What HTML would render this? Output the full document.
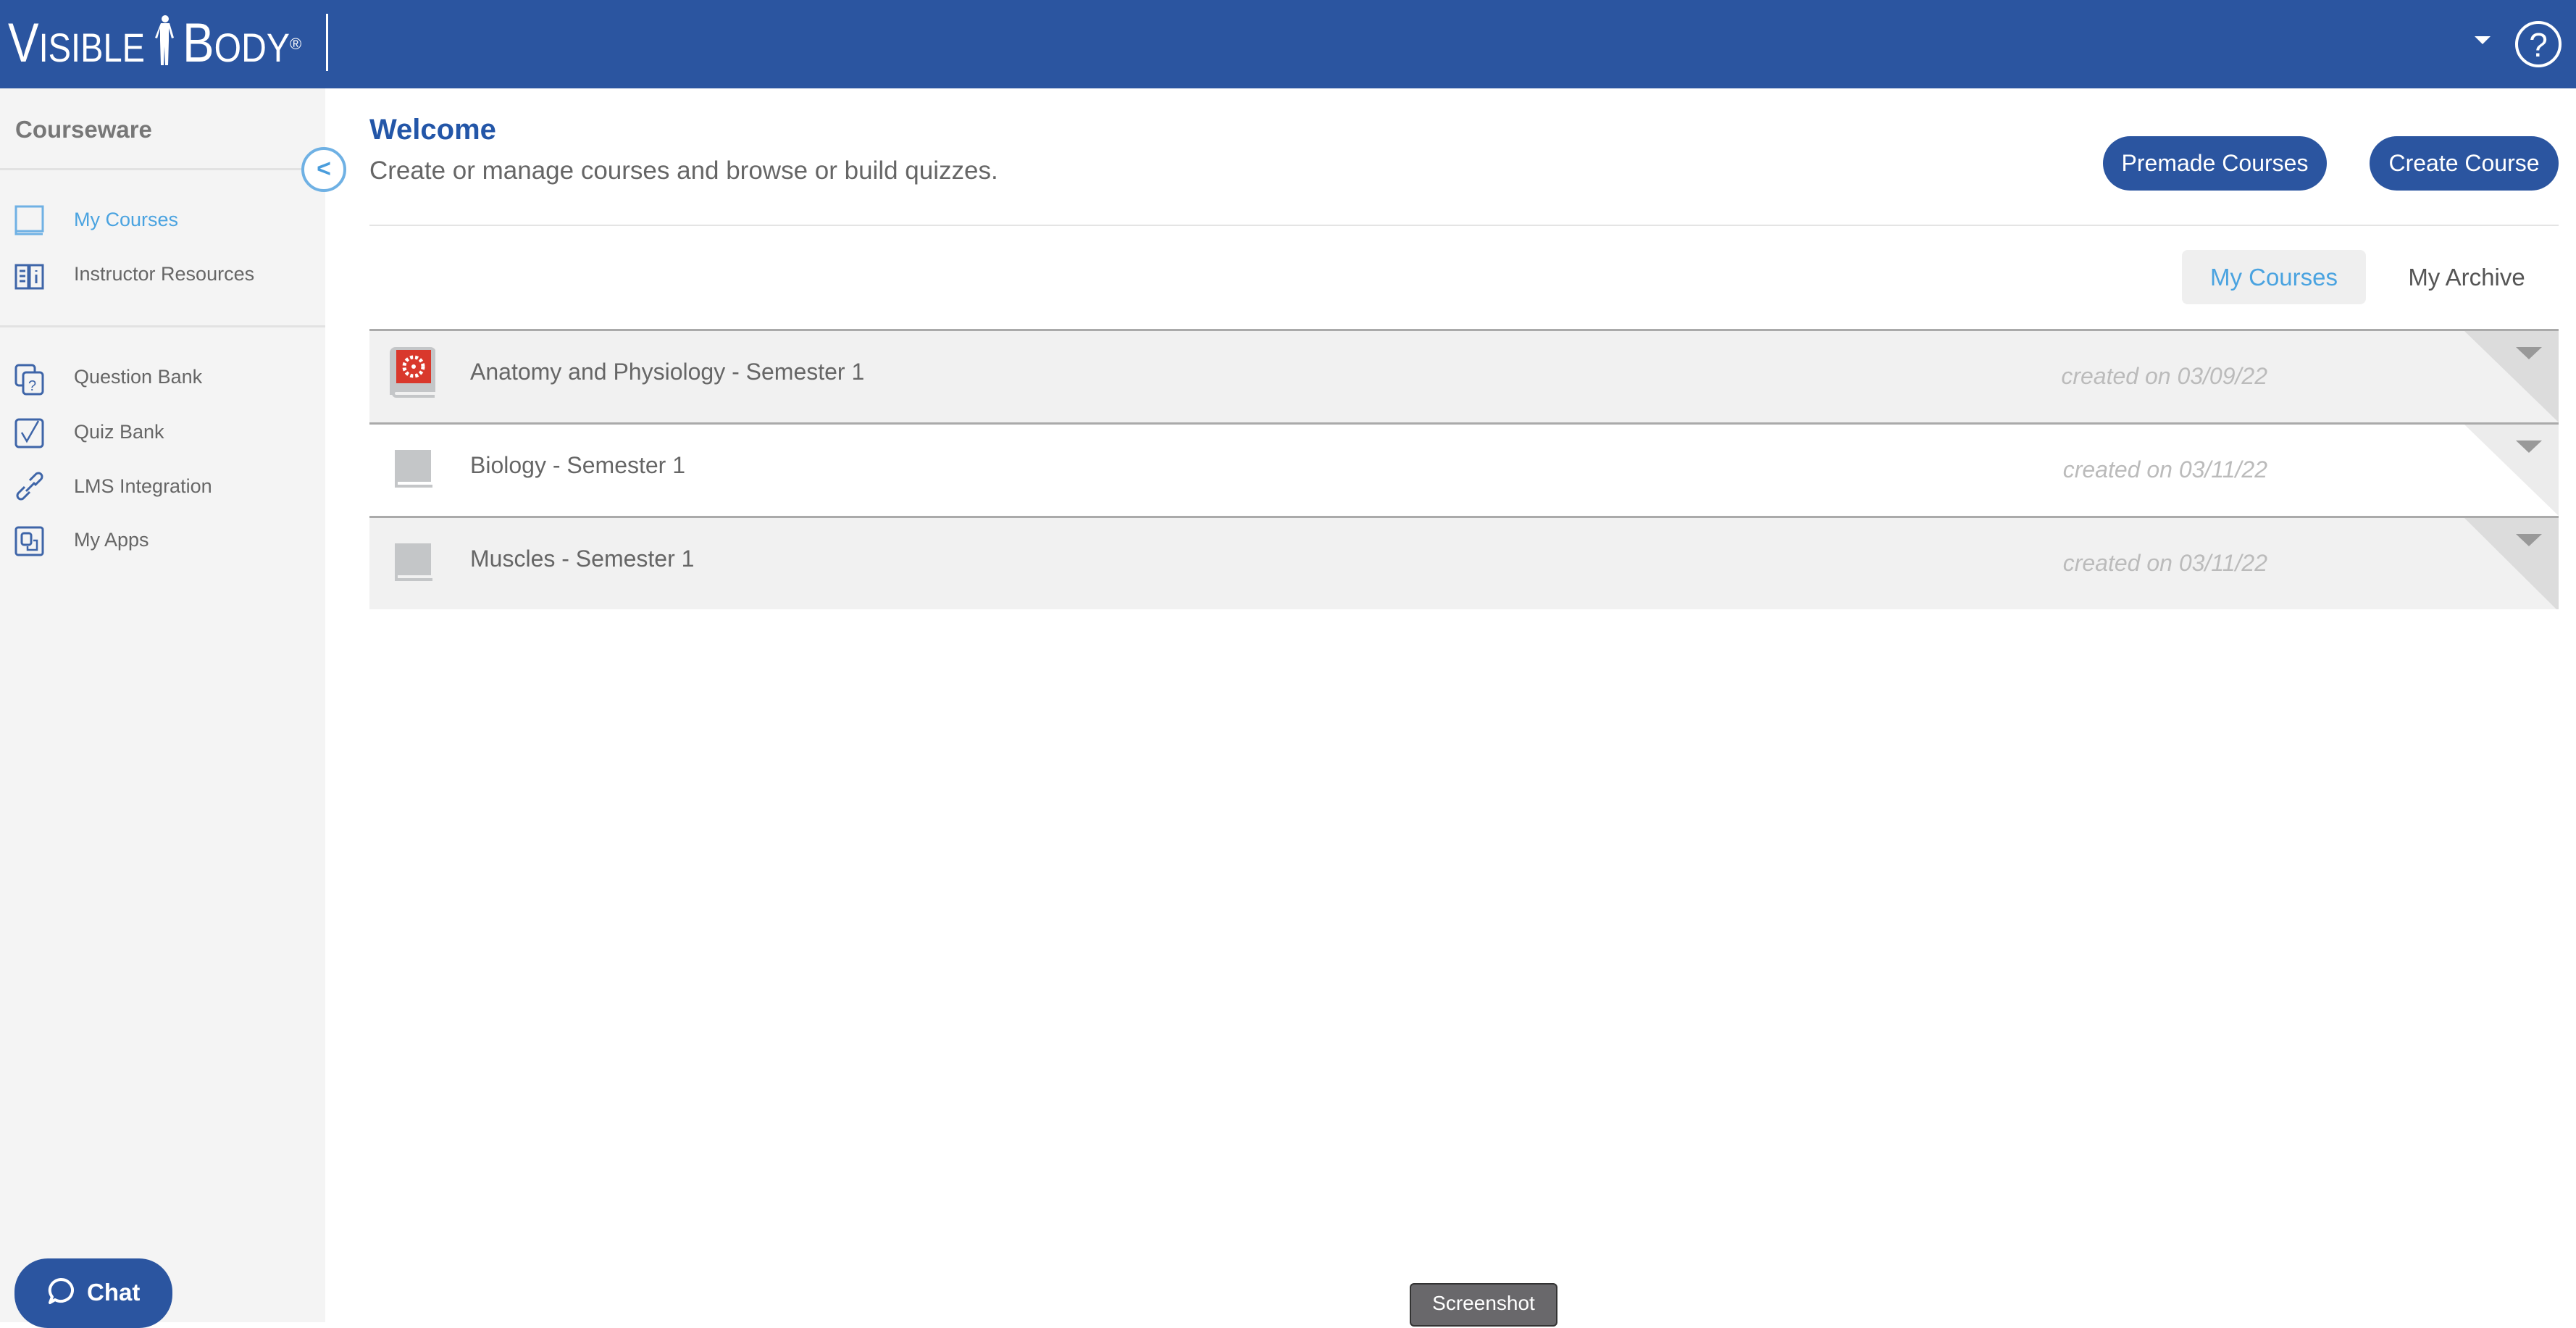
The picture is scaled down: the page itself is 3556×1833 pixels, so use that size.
<!DOCTYPE html>
<html><head><meta charset="utf-8">
<style>
*{margin:0;padding:0;box-sizing:border-box}
html,body{width:3556px;height:1825px;overflow:hidden;background:#fff;font-family:"Liberation Sans",sans-serif}
.hdr{position:absolute;left:0;top:0;width:3556px;height:122px;background:#2b55a0}
.lg{position:absolute;top:22px;color:#fff;white-space:nowrap;font-size:76px;line-height:76px;transform-origin:0 0}
.lg .sc{font-size:56px}
.div{position:absolute;left:450px;top:19px;width:3px;height:79px;background:#fff}
.side{position:absolute;left:0;top:122px;width:449px;height:1703px;background:#f4f4f4}
.cw{position:absolute;left:21px;font-size:33px;font-weight:bold;color:#777}
.hl{position:absolute;left:0;height:3px;width:449px;background:#e2e2e2}
.item{position:absolute;left:102px;font-size:27px;color:#666}
.ic{position:absolute;left:20px}
.coll{position:absolute;left:416px;top:203px;width:62px;height:62px;border:4px solid #6fb1e4;border-radius:50%;background:#fff;color:#4a9ddc;font-size:34px;font-weight:bold;text-align:center;line-height:52px}
.wel{position:absolute;left:510px;top:157px;font-size:40px;font-weight:bold;color:#2356a8}
.sub{position:absolute;left:510px;top:216px;font-size:35px;color:#666}
.btn{position:absolute;top:188px;height:75px;border-radius:38px;background:#2b55a0;color:#fff;font-size:32px;text-align:center;line-height:75px}
.line{position:absolute;left:510px;top:310px;width:3022px;height:2px;background:#e4e4e4}
.tab{position:absolute;top:345px;height:75px;border-radius:8px;font-size:33px;line-height:75px;text-align:center}
.row{position:absolute;left:510px;width:3022px;height:129px;border-top:3px solid #aaa;overflow:hidden}
.row .t{position:absolute;left:139px;top:38px;font-size:32px;color:#666}
.row .d{position:absolute;right:402px;top:44px;font-size:32px;color:#bbb;font-style:italic}
.row svg.tri{position:absolute;right:0;top:0}
.chat{position:absolute;left:20px;top:1737px;width:218px;height:96px;border-radius:46px;background:#2b55a0;color:#fff;font-size:33px;font-weight:bold}
.ss{position:absolute;left:1946px;top:1771px;width:204px;height:60px;background:#69686b;border:2px solid #333;border-radius:6px;color:#fff;font-size:28px;text-align:center;line-height:52px}
</style></head><body>
<div class="hdr">
 <div class="lg" style="left:11px;transform:scaleX(0.84)">V<span class="sc">ISIBLE</span></div>
 <svg style="position:absolute;left:210px;top:20px" width="36" height="72" viewBox="0 0 36 72"><circle cx="18" cy="6" r="5" fill="#fff"/><path d="M12 12h12l6 20-3 1-4-14v17l-1 34h-4l-1-26-1 26h-4l-1-34V19l-4 14-3-1z" fill="#fff"/></svg>
 <div class="lg" style="left:252px;transform:scaleX(0.86)">B<span class="sc">ODY</span></div>
 <div style="position:absolute;left:400px;top:48px;color:#fff;font-size:22px">®</div>
 <div class="div"></div>
 <svg style="position:absolute;left:3416px;top:50px" width="24" height="14"><path d="M0 0h22l-11 11z" fill="#fff"/></svg>
 <div style="position:absolute;left:3472px;top:29px;width:64px;height:64px;border:4px solid #fff;border-radius:50%;color:#fff;font-size:46px;text-align:center;line-height:58px">?</div>
</div>
<div class="side">
 <div class="cw" style="top:38px">Courseware</div>
 <div class="hl" style="top:110px"></div>
 <div class="hl" style="top:327px"></div>
 <svg class="ic" style="top:161px" width="42" height="44"><rect x="2" y="2" width="37" height="34" fill="none" stroke="#6fb1e4" stroke-width="3"/><path d="M2 36v4h37" fill="none" stroke="#6fb1e4" stroke-width="3"/></svg>
 <div class="item" style="top:166px;color:#4aa3e0">My Courses</div>
 <svg class="ic" style="top:240px" width="42" height="40"><path d="M2 4h17v32H2zM21 4h18v32H21z" fill="none" stroke="#3e65a8" stroke-width="3"/><path d="M7 12h8M7 19h8M7 26h8M30 11v2M30 17v12" stroke="#3e65a8" stroke-width="3"/></svg>
 <div class="item" style="top:241px">Instructor Resources</div>
 <svg class="ic" style="top:380px" width="42" height="44"><rect x="2" y="2" width="26" height="28" rx="4" fill="none" stroke="#3e65a8" stroke-width="3"/><rect x="12" y="12" width="27" height="30" rx="4" fill="#f4f4f4" stroke="#3e65a8" stroke-width="3"/><text x="19" y="37" font-size="20" fill="#3e65a8" font-family="Liberation Sans">?</text></svg>
 <div class="item" style="top:383px">Question Bank</div>
 <svg class="ic" style="top:455px" width="42" height="44"><rect x="2" y="2" width="37" height="38" rx="4" fill="none" stroke="#3e65a8" stroke-width="3"/><path d="M10 20l7 12 16-28" fill="none" stroke="#3e65a8" stroke-width="2.5"/></svg>
 <div class="item" style="top:459px">Quiz Bank</div>
 <svg class="ic" style="top:528px" width="42" height="44"><path d="M14 22l-9 9a5 5 0 0 0 7 7l9-9M28 20l9-9a5 5 0 0 0-7-7l-9 9M16 28l12-12" fill="none" stroke="#3e65a8" stroke-width="3"/></svg>
 <div class="item" style="top:534px">LMS Integration</div>
 <svg class="ic" style="top:604px" width="42" height="44"><rect x="2" y="2" width="37" height="38" rx="3" fill="none" stroke="#3e65a8" stroke-width="3"/><rect x="10" y="10" width="13" height="16" rx="3" fill="none" stroke="#3e65a8" stroke-width="3"/><path d="M18 28v5h13v-13h-5" fill="none" stroke="#3e65a8" stroke-width="2.5"/></svg>
 <div class="item" style="top:608px">My Apps</div>
</div>
<div class="coll">&lt;</div>
<div class="wel">Welcome</div>
<div class="sub">Create or manage courses and browse or build quizzes.</div>
<div class="btn" style="left:2903px;width:309px">Premade Courses</div>
<div class="btn" style="left:3271px;width:261px">Create Course</div>
<div class="line"></div>
<div class="tab" style="left:3012px;width:254px;background:#efefef;color:#4aa3e0">My Courses</div>
<div class="tab" style="left:3300px;width:210px;color:#555">My Archive</div>

<div class="row" style="top:454px;background:#f1f1f1">
 <svg style="position:absolute;left:25px;top:22px" width="66" height="74"><path d="M5 66V8a6 6 0 0 1 6-6h48a6 6 0 0 1 6 6v52H12a4 4 0 0 0 0 8h53" fill="#c4c6c8" stroke="#c4c6c8" stroke-width="4"/><rect x="12" y="4" width="48" height="46" fill="#d9382c"/><circle cx="36" cy="27" r="13" fill="none" stroke="#fff" stroke-width="5" stroke-dasharray="4 3"/><circle cx="36" cy="27" r="3" fill="#fff"/></svg>
 <div class="t">Anatomy and Physiology - Semester 1</div>
 <div class="d">created on 03/09/22</div>
 <svg class="tri" width="130" height="126"><path d="M0 0h130v126z" fill="#dcdcdc"/><path d="M71 22h36l-18 17z" fill="#999"/></svg>
</div>
<div class="row" style="top:583px;background:#fff">
 <svg style="position:absolute;left:33px;top:33px" width="56" height="58"><rect x="2" y="2" width="50" height="44" fill="#c4c6c8"/><path d="M4 46v6h50" fill="none" stroke="#c4c6c8" stroke-width="4"/></svg>
 <div class="t">Biology - Semester 1</div>
 <div class="d">created on 03/11/22</div>
 <svg class="tri" width="130" height="126"><path d="M0 0h130v126z" fill="#ececec"/><path d="M71 22h36l-18 17z" fill="#999"/></svg>
</div>
<div class="row" style="top:712px;background:#f1f1f1">
 <svg style="position:absolute;left:33px;top:33px" width="56" height="58"><rect x="2" y="2" width="50" height="44" fill="#c4c6c8"/><path d="M4 46v6h50" fill="none" stroke="#c4c6c8" stroke-width="4"/></svg>
 <div class="t">Muscles - Semester 1</div>
 <div class="d">created on 03/11/22</div>
 <svg class="tri" width="130" height="129"><path d="M0 0h130v129z" fill="#dcdcdc"/><path d="M71 22h36l-18 17z" fill="#999"/></svg>
</div>

<div class="chat"><svg style="position:absolute;left:44px;top:26px" width="40" height="44"><path d="M20 3a16 15 0 1 1-8 28l-7 4 3-8A16 15 0 0 1 20 3z" fill="none" stroke="#fff" stroke-width="4" stroke-linejoin="round"/></svg><span style="position:absolute;left:100px;top:28px">Chat</span></div>
<div class="ss">Screenshot</div>
</body></html>
